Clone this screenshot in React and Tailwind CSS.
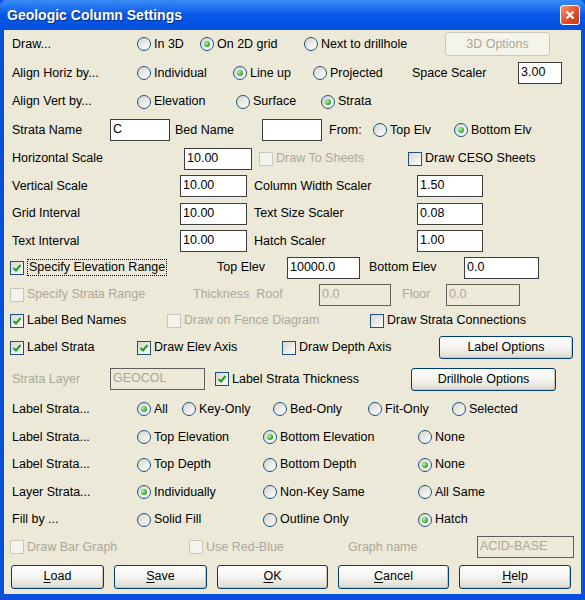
import React from 'react';

// Windows XP style dialog: every row is a flex line, cells have fixed widths.
function Cell({ w, children }) {
  return <div className={`${w} shrink-0 flex items-center`}>{children}</div>;
}

function Label({ children, gray }) {
  return (
    <span className={`whitespace-nowrap ${gray ? 'text-[#aca899]' : 'text-black'}`}>{children}</span>
  );
}

function Radio({ label, on }) {
  return (
    <div className="flex items-center">
      <span className="w-[14px] h-[14px] shrink-0 rounded-full border border-[#1c5180] bg-linear-to-br from-[#d6d5cd] to-white flex items-center justify-center">
        {on && (
          <span className="w-[6px] h-[6px] rounded-full bg-[radial-gradient(circle_at_35%_35%,#b6f3b2,#1f9f1c_75%)]" />
        )}
      </span>
      <span className="ml-[3px] whitespace-nowrap">{label}</span>
    </div>
  );
}

function Check({ label, on, off, focus }) {
  return (
    <div className="flex items-center">
      <span
        className={`w-[14px] h-[14px] shrink-0 border flex items-center justify-center ${
          off ? 'border-[#cac8bb] bg-[#f4f3ee]' : 'border-[#1c5180] bg-linear-to-br from-[#d6d5cd] to-white'
        }`}
      >
        {on && (
          <svg width="10" height="10" viewBox="0 0 10 10">
            <path d="M1.5 5 L4 7.5 L8.5 2" fill="none" stroke="#21a121" strokeWidth="2" />
          </svg>
        )}
      </span>
      <span
        className={`ml-[3px] whitespace-nowrap ${off ? 'text-[#aca899]' : ''} ${
          focus ? 'border border-dotted border-black px-[1px] leading-[15px]' : ''
        }`}
      >
        {label}
      </span>
    </div>
  );
}

function Field({ w, value, off }) {
  return (
    <div
      className={`${w} h-[22px] shrink-0 border pl-[2px] pt-[1px] leading-[16px] whitespace-nowrap overflow-hidden ${
        off ? 'border-[#5f5e5a] bg-[#ece9d8] text-[#aca899]' : 'border-[#3c3c3c] bg-white text-black'
      }`}
    >
      {value}
    </div>
  );
}

function Btn({ w, children, off, h = 'h-[24px]' }) {
  return (
    <div
      className={`${w} ${h} shrink-0 rounded-[3px] border flex items-center justify-center whitespace-nowrap ${
        off
          ? 'border-[#c9c7ba] bg-[#f5f4ea] text-[#aca899]'
          : 'border-[#003c74] bg-linear-to-b from-white via-[#f4f4f0] to-[#dcdad0] text-black shadow-[inset_-1px_-1px_0_#c9c6b8]'
      }`}
    >
      {children}
    </div>
  );
}

function U({ children }) {
  return <span className="underline underline-offset-2">{children}</span>;
}

export default function App() {
  return (
    <div className="w-[585px] h-[600px] bg-[#0a4fdc] flex flex-col font-['Liberation_Sans',Arial,sans-serif] text-[12.5px] text-black select-none">
      {/* title bar */}
      <div className="h-[30px] shrink-0 flex items-center justify-between bg-linear-to-b from-[#3a8cf8] via-[#0857e8] to-[#0350dd] rounded-t-[6px]">
        <span className="ml-[7px] text-white font-bold text-[14px] [text-shadow:1px_1px_0_#0a2a8a]">
          Geologic Column Settings
        </span>
        <div className="mr-[5px] w-[20px] h-[20px] rounded-[3px] border border-white bg-linear-to-br from-[#f09a78] via-[#e1532c] to-[#c3361b] flex items-center justify-center">
          <svg width="10" height="10" viewBox="0 0 10 10">
            <path d="M1.5 1.5 L8.5 8.5 M8.5 1.5 L1.5 8.5" stroke="white" strokeWidth="2.2" />
          </svg>
        </div>
      </div>

      {/* client area */}
      <div className="mx-[4px] mb-[6px] flex-1 bg-[#ece9d8] flex flex-col">
        <div className="h-[28px] flex items-center pl-[8px]">
          <Cell w="w-[125px]"><Label>Draw...</Label></Cell>
          <Cell w="w-[63px]"><Radio label="In 3D" /></Cell>
          <Cell w="w-[104px]"><Radio label="On 2D grid" on /></Cell>
          <Cell w="w-[141px]"><Radio label="Next to drillhole" /></Cell>
          <Btn w="w-[105px]" off>3D Options</Btn>
        </div>

        <div className="h-[30px] flex items-center pl-[8px]">
          <Cell w="w-[125px]"><Label>Align Horiz by...</Label></Cell>
          <Cell w="w-[96px]"><Radio label="Individual" /></Cell>
          <Cell w="w-[80px]"><Radio label="Line up" on /></Cell>
          <Cell w="w-[99px]"><Radio label="Projected" /></Cell>
          <Cell w="w-[106px]"><Label>Space Scaler</Label></Cell>
          <Field w="w-[44px]" value="3.00" />
        </div>

        <div className="h-[27px] flex items-center pl-[8px]">
          <Cell w="w-[125px]"><Label>Align Vert by...</Label></Cell>
          <Cell w="w-[99px]"><Radio label="Elevation" /></Cell>
          <Cell w="w-[85px]"><Radio label="Surface" /></Cell>
          <Cell w="w-[90px]"><Radio label="Strata" on /></Cell>
        </div>

        <div className="h-[30px] flex items-center pl-[8px]">
          <Cell w="w-[98px]"><Label>Strata Name</Label></Cell>
          <Field w="w-[60px]" value="C" />
          <Cell w="w-[5px]" />
          <Cell w="w-[87px]"><Label>Bed Name</Label></Cell>
          <Field w="w-[60px]" value="" />
          <Cell w="w-[7px]" />
          <Cell w="w-[44px]"><Label>From:</Label></Cell>
          <Cell w="w-[81px]"><Radio label="Top Elv" /></Cell>
          <Cell w="w-[90px]"><Radio label="Bottom Elv" on /></Cell>
        </div>

        <div className="h-[27px] flex items-center pl-[8px]">
          <Cell w="w-[172px]"><Label>Horizontal Scale</Label></Cell>
          <Field w="w-[68px]" value="10.00" />
          <Cell w="w-[7px]" />
          <Cell w="w-[149px]"><Check label="Draw To Sheets" off /></Cell>
          <Cell w="w-[140px]"><Check label="Draw CESO Sheets" /></Cell>
        </div>

        <div className="h-[28px] flex items-center pl-[8px]">
          <Cell w="w-[168px]"><Label>Vertical Scale</Label></Cell>
          <Field w="w-[67px]" value="10.00" />
          <Cell w="w-[7px]" />
          <Cell w="w-[163px]"><Label>Column Width Scaler</Label></Cell>
          <Field w="w-[66px]" value="1.50" />
        </div>

        <div className="h-[27px] flex items-center pl-[8px]">
          <Cell w="w-[168px]"><Label>Grid Interval</Label></Cell>
          <Field w="w-[67px]" value="10.00" />
          <Cell w="w-[7px]" />
          <Cell w="w-[163px]"><Label>Text Size Scaler</Label></Cell>
          <Field w="w-[66px]" value="0.08" />
        </div>

        <div className="h-[28px] flex items-center pl-[8px]">
          <Cell w="w-[168px]"><Label>Text Interval</Label></Cell>
          <Field w="w-[67px]" value="10.00" />
          <Cell w="w-[7px]" />
          <Cell w="w-[163px]"><Label>Hatch Scaler</Label></Cell>
          <Field w="w-[66px]" value="1.00" />
        </div>

        <div className="h-[25px] flex items-center pl-[6px]">
          <Cell w="w-[207px]"><Check label="Specify Elevation Range" on focus /></Cell>
          <Cell w="w-[70px]"><Label>Top Elev</Label></Cell>
          <Field w="w-[73px]" value="10000.0" />
          <Cell w="w-[9px]" />
          <Cell w="w-[95px]"><Label>Bottom Elev</Label></Cell>
          <Field w="w-[75px]" value="0.0" />
        </div>

        <div className="h-[29px] flex items-center pl-[6px]">
          <Cell w="w-[183px]"><Check label="Specify Strata Range" off /></Cell>
          <Cell w="w-[126px]"><Label gray>Thickness&nbsp; Roof</Label></Cell>
          <Field w="w-[72px]" value="0.0" off />
          <Cell w="w-[11px]" />
          <Cell w="w-[44px]"><Label gray>Floor</Label></Cell>
          <Field w="w-[74px]" value="0.0" off />
        </div>

        <div className="h-[23px] flex items-center pl-[6px]">
          <Cell w="w-[157px]"><Check label="Label Bed Names" on /></Cell>
          <Cell w="w-[203px]"><Check label="Draw on Fence Diagram" off /></Cell>
          <Cell w="w-[190px]"><Check label="Draw Strata Connections" /></Cell>
        </div>

        <div className="h-[31px] flex items-center pl-[6px]">
          <Cell w="w-[127px]"><Check label="Label Strata" on /></Cell>
          <Cell w="w-[145px]"><Check label="Draw Elev Axis" on /></Cell>
          <Cell w="w-[157px]"><Check label="Draw Depth Axis" /></Cell>
          <Btn w="w-[134px]" h="h-[23px]">Label Options</Btn>
        </div>

        <div className="h-[32px] flex items-center pl-[8px]">
          <Cell w="w-[98px]"><Label gray>Strata Layer</Label></Cell>
          <Field w="w-[95px]" value="GEOCOL" off />
          <Cell w="w-[10px]" />
          <Cell w="w-[196px]"><Check label="Label Strata Thickness" on /></Cell>
          <Btn w="w-[145px]" h="h-[23px]">Drillhole Options</Btn>
        </div>

        <div className="h-[28px] flex items-center pl-[8px]">
          <Cell w="w-[125px]"><Label>Label Strata...</Label></Cell>
          <Cell w="w-[45px]"><Radio label="All" on /></Cell>
          <Cell w="w-[91px]"><Radio label="Key-Only" /></Cell>
          <Cell w="w-[95px]"><Radio label="Bed-Only" /></Cell>
          <Cell w="w-[84px]"><Radio label="Fit-Only" /></Cell>
          <Cell w="w-[90px]"><Radio label="Selected" /></Cell>
        </div>

        <div className="h-[28px] flex items-center pl-[8px]">
          <Cell w="w-[125px]"><Label>Label Strata...</Label></Cell>
          <Cell w="w-[126px]"><Radio label="Top Elevation" /></Cell>
          <Cell w="w-[155px]"><Radio label="Bottom Elevation" on /></Cell>
          <Cell w="w-[90px]"><Radio label="None" /></Cell>
        </div>

        <div className="h-[27px] flex items-center pl-[8px]">
          <Cell w="w-[125px]"><Label>Label Strata...</Label></Cell>
          <Cell w="w-[126px]"><Radio label="Top Depth" /></Cell>
          <Cell w="w-[155px]"><Radio label="Bottom Depth" /></Cell>
          <Cell w="w-[90px]"><Radio label="None" on /></Cell>
        </div>

        <div className="h-[28px] flex items-center pl-[8px]">
          <Cell w="w-[125px]"><Label>Layer Strata...</Label></Cell>
          <Cell w="w-[126px]"><Radio label="Individually" on /></Cell>
          <Cell w="w-[155px]"><Radio label="Non-Key Same" /></Cell>
          <Cell w="w-[90px]"><Radio label="All Same" /></Cell>
        </div>

        <div className="h-[27px] flex items-center pl-[8px]">
          <Cell w="w-[125px]"><Label>Fill by ...</Label></Cell>
          <Cell w="w-[126px]"><Radio label="Solid Fill" /></Cell>
          <Cell w="w-[155px]"><Radio label="Outline Only" /></Cell>
          <Cell w="w-[90px]"><Radio label="Hatch" on /></Cell>
        </div>

        <div className="h-[28px] flex items-center pl-[6px]">
          <Cell w="w-[179px]"><Check label="Draw Bar Graph" off /></Cell>
          <Cell w="w-[159px]"><Check label="Use Red-Blue" off /></Cell>
          <Cell w="w-[129px]"><Label gray>Graph name</Label></Cell>
          <Field w="w-[97px]" value="ACID-BASE" off />
        </div>

        <div className="h-[31px] flex items-center pl-[7px] gap-[10px]">
          <Btn w="w-[93px]"><span><U>L</U>oad</span></Btn>
          <Btn w="w-[93px]"><span><U>S</U>ave</span></Btn>
          <Btn w="w-[111px]"><span><U>O</U>K</span></Btn>
          <Btn w="w-[111px]"><span><U>C</U>ancel</span></Btn>
          <Btn w="w-[112px]"><span><U>H</U>elp</span></Btn>
        </div>
      </div>
    </div>
  );
}
